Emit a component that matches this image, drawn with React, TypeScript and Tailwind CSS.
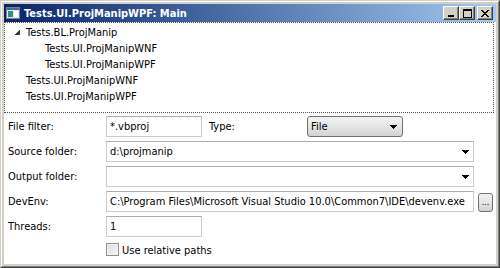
import React from "react";

function CaptionButton({ children, className = "" }: { children: React.ReactNode; className?: string }) {
  return (
    <div
      className={
        "w-[16px] h-[14px] bg-[#D4D0C8] border border-t-white border-l-white border-r-[#404040] border-b-[#404040] shadow-[inset_-1px_-1px_0_#808080] flex items-center justify-center " +
        className
      }
    >
      {children}
    </div>
  );
}

function Arrow() {
  return (
    <svg width="7" height="4" viewBox="0 0 7 4" shapeRendering="crispEdges">
      <polygon points="0,0 7,0 3.5,4" fill="#000" />
    </svg>
  );
}

function TreeRow({ indent, text, expander }: { indent: number; text: string; expander?: boolean }) {
  return (
    <div className="h-[16px] flex items-center">
      <div style={{ width: indent }} className="shrink-0 flex items-center justify-end pr-[6px]">
        {expander && (
          <svg width="6" height="6" viewBox="0 0 6 6" shapeRendering="crispEdges">
            <polygon points="6,0 6,6 0,6" fill="#3c3c3c" />
          </svg>
        )}
      </div>
      <span>{text}</span>
    </div>
  );
}

export default function App() {
  return (
    <div className="w-[500px] h-[268px] flex bg-[#D4D0C8] border border-t-[#D4D0C8] border-l-[#D4D0C8] border-r-[#404040] border-b-[#404040] font-['DejaVu_Sans_Condensed','Liberation_Sans',sans-serif] text-[11px] text-black leading-none">
      <div className="flex-1 flex flex-col p-[2px] border border-t-white border-l-white border-r-[#808080] border-b-[#808080]">
        {/* Title bar */}
        <div className="h-[18px] shrink-0 flex items-center bg-gradient-to-r from-[#0A246A] to-[#A6CAF0] pl-[2px] pr-[3px]">
          <svg width="14" height="12" viewBox="0 0 14 12" shapeRendering="crispEdges" className="shrink-0">
            <rect x="0" y="0" width="14" height="12" fill="#E8E8E8" />
            <rect x="0.5" y="0.5" width="13" height="11" fill="none" stroke="#808080" />
            <rect x="1" y="1" width="12" height="2" fill="#3A6EA5" />
            <rect x="2" y="4" width="5" height="6" fill="#2F8F83" />
            <rect x="8" y="4" width="4" height="6" fill="#FFFFFF" />
          </svg>
          <span className="ml-[4px] text-white font-bold text-[11px] font-['DejaVu_Sans_Condensed','Liberation_Sans',sans-serif] whitespace-nowrap">
            Tests.UI.ProjManipWPF: Main
          </span>
          <div className="ml-auto flex items-center">
            <CaptionButton>
              <svg width="8" height="8" viewBox="0 0 8 8" shapeRendering="crispEdges">
                <rect x="1" y="6" width="6" height="2" fill="#000" />
              </svg>
            </CaptionButton>
            <CaptionButton>
              <svg width="9" height="9" viewBox="0 0 9 9" shapeRendering="crispEdges">
                <rect x="0" y="0" width="9" height="2" fill="#000" />
                <rect x="0" y="0" width="1" height="9" fill="#000" />
                <rect x="8" y="0" width="1" height="9" fill="#000" />
                <rect x="0" y="8" width="9" height="1" fill="#000" />
              </svg>
            </CaptionButton>
            <CaptionButton className="ml-[2px]">
              <svg width="8" height="7" viewBox="0 0 8 7" shapeRendering="crispEdges">
                <path d="M0 0h2v1h-2zM6 0h2v1h-2zM1 1h2v1h-2zM5 1h2v1h-2zM2 2h4v1h-4zM3 3h2v1h-2zM2 4h4v1h-4zM1 5h2v1h-2zM5 5h2v1h-2zM0 6h2v1h-2zM6 6h2v1h-2z" fill="#000" />
              </svg>
            </CaptionButton>
          </div>
        </div>

        {/* Client area */}
        <div className="flex-1 bg-white flex flex-col">
          {/* Tree */}
          <div className="h-[91px] mr-[2px] border border-dotted border-[#505050] pt-[1px] flex flex-col">
            <TreeRow indent={21} text="Tests.BL.ProjManip" expander />
            <TreeRow indent={40} text="Tests.UI.ProjManipWNF" />
            <TreeRow indent={40} text="Tests.UI.ProjManipWPF" />
            <TreeRow indent={21} text="Tests.UI.ProjManipWNF" />
            <TreeRow indent={21} text="Tests.UI.ProjManipWPF" />
          </div>

          {/* Form */}
          <div className="mt-[3px] pl-[4px] flex flex-col gap-[4px]">
            <div className="h-[21px] flex items-center">
              <span className="w-[98px] shrink-0">File filter:</span>
              <div className="w-[96px] h-[21px] border border-[#C9CCD2] border-t-[#ABADB3] flex items-center pl-[3px]">*.vbproj</div>
              <span className="ml-[7px] w-[98px] shrink-0">Type:</span>
              <div className="w-[96px] h-[21px] rounded-[3px] border border-[#707070] bg-gradient-to-b from-[#F3F3F3] via-[#E6E6E6] to-[#D2D2D2] flex items-center pl-[3px] pr-[5px]">
                <span>File</span>
                <div className="ml-auto">
                  <Arrow />
                </div>
              </div>
            </div>

            <div className="h-[21px] flex items-center">
              <span className="w-[98px] shrink-0">Source folder:</span>
              <div className="w-[368px] h-[21px] border border-[#C9CCD2] border-t-[#ABADB3] flex items-center pl-[3px] pr-[4px]">
                <span>d:\projmanip</span>
                <div className="ml-auto">
                  <Arrow />
                </div>
              </div>
            </div>

            <div className="h-[21px] flex items-center">
              <span className="w-[98px] shrink-0">Output folder:</span>
              <div className="w-[368px] h-[21px] border border-[#C9CCD2] border-t-[#ABADB3] flex items-center pl-[3px] pr-[4px]">
                <div className="ml-auto">
                  <Arrow />
                </div>
              </div>
            </div>

            <div className="h-[21px] flex items-center">
              <span className="w-[98px] shrink-0">DevEnv:</span>
              <div className="w-[368px] h-[21px] border border-[#C9CCD2] border-t-[#ABADB3] flex items-center pl-[3px] whitespace-nowrap overflow-hidden">
                C:\Program Files\Microsoft Visual Studio 10.0\Common7\IDE\devenv.exe
              </div>
              <div className="ml-[4px] w-[15px] h-[19px] mt-[1px] rounded-[3px] border border-[#707070] bg-gradient-to-b from-[#F3F3F3] via-[#E6E6E6] to-[#D2D2D2] flex items-end justify-center pb-[4px] text-[9px]">
                ...
              </div>
            </div>

            <div className="h-[21px] flex items-center">
              <span className="w-[98px] shrink-0">Threads:</span>
              <div className="w-[96px] h-[21px] border border-[#C9CCD2] border-t-[#ABADB3] flex items-center pl-[3px]">1</div>
            </div>

            <div className="mt-[2px] flex items-center pl-[98px]">
              <div className="w-[13px] h-[13px] border border-[#8E8F8F] bg-gradient-to-br from-[#DCDCDC] to-[#F7F7F7] shadow-[inset_0_0_0_1px_#F4F4F4]" />
              <span className="ml-[3px] mt-[1px]">Use relative paths</span>
            </div>
          </div>
        </div>
      </div>
    </div>
  );
}
